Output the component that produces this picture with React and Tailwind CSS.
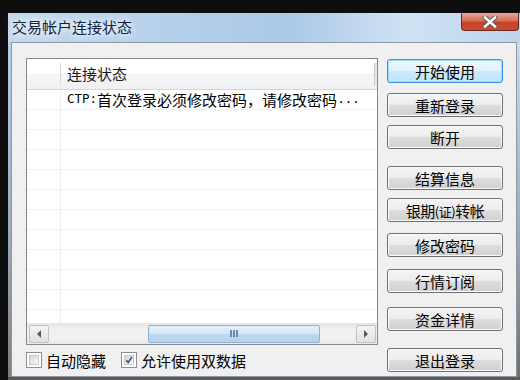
import React from "react";

const cjk = { fontFamily: '"Noto Sans CJK SC", "Noto Sans", sans-serif' };
const mono = { fontFamily: '"DejaVu Sans Mono", "Liberation Mono", monospace' };

const buttons = [
  { label: "开始使用", mt: "mt-[1px]", def: true },
  { label: "重新登录", mt: "mt-[10px]" },
  { label: "断开", mt: "mt-[8px]" },
  { label: "结算信息", mt: "mt-[17px]" },
  { label: "银期(证)转帐", mt: "mt-[8px]" },
  { label: "修改密码", mt: "mt-[11px]" },
  { label: "行情订阅", mt: "mt-[12px]" },
  { label: "资金详情", mt: "mt-[14px]" },
  { label: "退出登录", mt: "mt-[17px]" },
];

function WinButton({ label, mt, def }) {
  return (
    <div
      className={
        mt +
        " h-[24px] w-[116px] flex items-center justify-center rounded-[3px] border text-[15px] leading-none text-black " +
        (def
          ? "border-[#3c8fd8] bg-[linear-gradient(to_bottom,#eef8fe_0%,#e0f2fd_50%,#cbeafc_50%,#bde4fb_100%)] shadow-[inset_0_0_0_1px_#9fdcfa]"
          : "border-[#707070] bg-[linear-gradient(to_bottom,#f4f4f4_0%,#ececec_50%,#dedede_50%,#d0d0d0_100%)] shadow-[inset_0_0_0_1px_#fbfbfb]")
      }
      style={cjk}
    >
      {label === "银期(证)转帐" ? (
        <span className="tracking-[-0.5px]">
          银期<span className="text-[13px]">(证)</span>转帐
        </span>
      ) : (
        label
      )}
    </div>
  );
}

function ScrollArrow({ dir }) {
  return (
    <div className="h-[18px] w-[20px] rounded-[2px] border border-[#c2c2c2] bg-[linear-gradient(to_bottom,#f3f3f3,#e2e2e2)] flex items-center justify-center">
      <svg width="6" height="8" viewBox="0 0 6 8">
        {dir === "left" ? (
          <polygon points="5,0 5,8 1,4" fill="#5a5a5a" />
        ) : (
          <polygon points="1,0 1,8 5,4" fill="#5a5a5a" />
        )}
      </svg>
    </div>
  );
}

function Checkbox({ checked }) {
  return (
    <div className="h-[16px] w-[16px] border border-[#8e8f8f] bg-white p-[2px]">
      <div className="h-full w-full border border-[#c8c8c8] bg-[linear-gradient(135deg,#d6d6d6,#f8f8f8)] flex items-center justify-center">
        {checked && (
          <svg width="10" height="10" viewBox="0 0 10 10">
            <path d="M1.5 5.2 L4 8 L8.6 1.2" fill="none" stroke="#34509a" strokeWidth="2" />
          </svg>
        )}
      </div>
    </div>
  );
}

export default function App() {
  const rows = Array.from({ length: 12 });
  return (
    <div className="w-[520px] h-[380px] bg-[#0e0e0e] overflow-hidden" style={cjk}>
      <div className="h-[13px]" />
      <div className="ml-[8px] w-[512px] h-[367px] flex flex-col bg-[linear-gradient(to_right,#c3d8ee_0%,#b4cfea_35%,#abc9e8_55%,#d0e2f4_78%,#bcd4ed_100%)]">
        {/* title bar */}
        <div className="relative h-[29px] flex items-center pl-[4px]">
          <span
            className="text-[15px] leading-none text-[#10233f] mt-[-3px] [text-shadow:0_0_6px_#ffffff,0_0_10px_#ffffff]"
            style={cjk}
          >
            交易帐户连接状态
          </span>
          <div className="absolute right-[1px] top-0 h-[18px] w-[58px] rounded-b-[4px] border border-t-0 border-[#6b2a20] bg-[linear-gradient(to_bottom,#e9a899_0%,#d96e58_45%,#c7432b_55%,#c64b33_100%)] flex items-center justify-center">
            <svg width="16" height="12" viewBox="0 0 16 12">
              <path d="M3 1.5 L13 10.5 M13 1.5 L3 10.5" stroke="#5a5a5a" strokeWidth="4.5" strokeLinecap="square" />
              <path d="M3 1.5 L13 10.5 M13 1.5 L3 10.5" stroke="#ffffff" strokeWidth="2.6" strokeLinecap="square" />
            </svg>
          </div>
        </div>
        {/* body */}
        <div className="flex flex-1">
          <div className="w-[3px] bg-[linear-gradient(to_bottom,#b6cfe9,#9aa7b5_60%,#7d7d7d)]" />
          <div className="w-[506px] h-[335px] border border-[#8c98a6] bg-[#f0f0f0] pl-[14px] pt-[15px] flex">
            <div className="flex flex-col w-[352px]">
              {/* list box */}
              <div className="h-[287px] border border-[#828790] bg-white flex flex-col">
                <div className="h-[31px] flex border-b border-[#d5d5d5] bg-[linear-gradient(to_bottom,#ffffff_0%,#ffffff_45%,#f5f6f7_50%,#eff0f2_100%)]">
                  <div className="w-[34px] my-[4px] border-r border-[#d5d5d5]" />
                  <div className="flex-1 flex items-center pl-[6px] text-[15px] text-[#1a1a1a]">连接状态</div>
                  <div className="w-[3px] my-[4px] border-l border-[#c8c8c8] bg-[#e6e6e6]" />
                </div>
                <div className="flex-1 overflow-hidden">
                  {rows.map((_, i) => (
                    <div key={i} className="h-[20px] flex border-b border-[#f0f0f0]">
                      <div className="w-[34px] border-r border-[#f0f0f0]" />
                      <div className="flex-1 flex items-center pl-[6px] text-[15px] leading-none text-black whitespace-nowrap">
                        {i === 0 && (
                          <>
                            <span className="text-[12.5px]" style={mono}>CTP:</span>
                            <span>首次登录必须修改密码，请修改密码</span>
                            <span className="text-[12.5px]" style={mono}>...</span>
                          </>
                        )}
                      </div>
                    </div>
                  ))}
                </div>
                {/* horizontal scrollbar */}
                <div className="h-[21px] bg-[linear-gradient(to_bottom,#e4e4e4,#f1f1f1_30%,#f1f1f1_70%,#e8e8e8)] flex items-center pl-[2px] pr-[1px]">
                  <ScrollArrow dir="left" />
                  <div className="flex-1 h-[18px] relative">
                    <div className="absolute left-[99px] top-0 h-[18px] w-[172px] rounded-[2px] border border-[#8fb1d1] bg-[linear-gradient(to_bottom,#e4eff9,#d3e6f6_50%,#bed8ef_50%,#b6d3ee)] flex items-center justify-center gap-[1px]">
                      <div className="h-[7px] w-[2px] bg-[#6a8cb0]" />
                      <div className="h-[7px] w-[2px] bg-[#6a8cb0]" />
                      <div className="h-[7px] w-[2px] bg-[#6a8cb0]" />
                    </div>
                  </div>
                  <ScrollArrow dir="right" />
                </div>
              </div>
              {/* checkboxes */}
              <div className="mt-[7px] flex items-center text-[15px] text-black leading-none">
                <Checkbox />
                <span className="ml-[4px]">自动隐藏</span>
                <div className="ml-[15px]">
                  <Checkbox checked />
                </div>
                <span className="ml-[4px]">允许使用双数据</span>
              </div>
            </div>
            <div className="ml-[9px] flex flex-col">
              {buttons.map((b) => (
                <WinButton key={b.label} {...b} />
              ))}
            </div>
          </div>
          <div className="w-[3px] bg-[linear-gradient(to_bottom,#c9dcf0,#9aa7b5_60%,#6e6e6e)]" />
        </div>
        <div className="h-[3px] bg-[#5a5a5a]" />
      </div>
    </div>
  );
}
